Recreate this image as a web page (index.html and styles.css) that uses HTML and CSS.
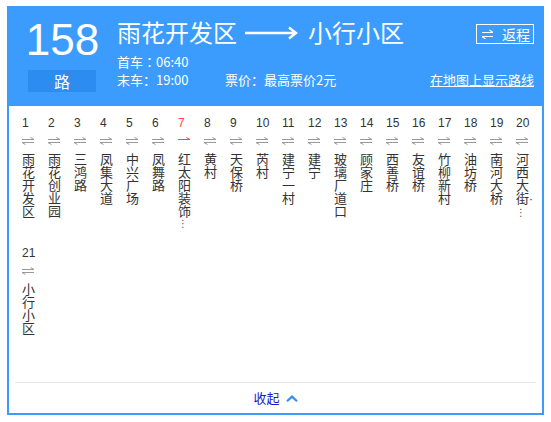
FILE: index.html
```html
<!DOCTYPE html>
<html lang="zh-CN">
<head>
<meta charset="utf-8">
<title>158路</title>
<link rel="stylesheet" href="styles.css">
</head>
<body>
<div class="card">
  <header class="head">
    <div class="lineno">
      <div class="num">158</div>
      <div class="lu">路</div>
    </div>
    <div class="info">
      <div class="titlerow">
        <span class="from">雨花开发区</span>
        <svg class="bigarrow" width="53" height="14" viewBox="0 0 53 14"><path d="M0 7H51M44 1.5L51 7L44 12.5" stroke="#fff" stroke-width="2.4" fill="none"/></svg>
        <span class="to">小行小区</span>
        <a class="back" href="#"><svg class="backicon" width="11" height="10" viewBox="0 0 11 10"><path d="M0 3.5H11M11 3.5L7.5 1M0 7.5H11M0 7.5L3.5 10" stroke="#fff" stroke-width="1.2" fill="none"/></svg>返程</a>
      </div>
      <div class="row">首车<span class="colon">：</span>06:40</div>
      <div class="row"><span class="last">末车<span class="colon">：</span>19:00</span><span>票价<span class="colon">：</span>最高票价2元</span><a class="maplink" href="#">在地图上显示路线</a></div>
    </div>
  </header>

  <div class="stops">
    <div class="stop"><div class="no">1</div><svg class="dir" width="12" height="8" viewBox="0 0 12 8"><path d="M0 2.5H12M12 2.5L8.5 0.5M0 5.5H12M0 5.5L3.5 7.5" stroke="#999" fill="none"/></svg><div class="name">雨花开发区</div></div>
    <div class="stop"><div class="no">2</div><svg class="dir" width="12" height="8" viewBox="0 0 12 8"><path d="M0 2.5H12M12 2.5L8.5 0.5M0 5.5H12M0 5.5L3.5 7.5" stroke="#999" fill="none"/></svg><div class="name">雨花创业园</div></div>
    <div class="stop"><div class="no">3</div><svg class="dir" width="12" height="8" viewBox="0 0 12 8"><path d="M0 2.5H12M12 2.5L8.5 0.5M0 5.5H12M0 5.5L3.5 7.5" stroke="#999" fill="none"/></svg><div class="name">三鸿路</div></div>
    <div class="stop"><div class="no">4</div><svg class="dir" width="12" height="8" viewBox="0 0 12 8"><path d="M0 2.5H12M12 2.5L8.5 0.5M0 5.5H12M0 5.5L3.5 7.5" stroke="#999" fill="none"/></svg><div class="name">凤集大道</div></div>
    <div class="stop"><div class="no">5</div><svg class="dir" width="12" height="8" viewBox="0 0 12 8"><path d="M0 2.5H12M12 2.5L8.5 0.5M0 5.5H12M0 5.5L3.5 7.5" stroke="#999" fill="none"/></svg><div class="name">中兴广场</div></div>
    <div class="stop"><div class="no">6</div><svg class="dir" width="12" height="8" viewBox="0 0 12 8"><path d="M0 2.5H12M12 2.5L8.5 0.5M0 5.5H12M0 5.5L3.5 7.5" stroke="#999" fill="none"/></svg><div class="name">凤舞路</div></div>
    <div class="stop oneway"><div class="no">7</div><svg class="dir" width="12" height="8" viewBox="0 0 12 8"><path d="M0 2.5H12M12 2.5L8.5 0.5" stroke="#f44" fill="none"/></svg><div class="name">红太阳装饰<span class="more">⋮</span></div></div>
    <div class="stop"><div class="no">8</div><svg class="dir" width="12" height="8" viewBox="0 0 12 8"><path d="M0 2.5H12M12 2.5L8.5 0.5M0 5.5H12M0 5.5L3.5 7.5" stroke="#999" fill="none"/></svg><div class="name">黄村</div></div>
    <div class="stop"><div class="no">9</div><svg class="dir" width="12" height="8" viewBox="0 0 12 8"><path d="M0 2.5H12M12 2.5L8.5 0.5M0 5.5H12M0 5.5L3.5 7.5" stroke="#999" fill="none"/></svg><div class="name">天保桥</div></div>
    <div class="stop"><div class="no">10</div><svg class="dir" width="12" height="8" viewBox="0 0 12 8"><path d="M0 2.5H12M12 2.5L8.5 0.5M0 5.5H12M0 5.5L3.5 7.5" stroke="#999" fill="none"/></svg><div class="name">芮村</div></div>
    <div class="stop"><div class="no">11</div><svg class="dir" width="12" height="8" viewBox="0 0 12 8"><path d="M0 2.5H12M12 2.5L8.5 0.5M0 5.5H12M0 5.5L3.5 7.5" stroke="#999" fill="none"/></svg><div class="name">建宁一村</div></div>
    <div class="stop"><div class="no">12</div><svg class="dir" width="12" height="8" viewBox="0 0 12 8"><path d="M0 2.5H12M12 2.5L8.5 0.5M0 5.5H12M0 5.5L3.5 7.5" stroke="#999" fill="none"/></svg><div class="name">建宁</div></div>
    <div class="stop"><div class="no">13</div><svg class="dir" width="12" height="8" viewBox="0 0 12 8"><path d="M0 2.5H12M12 2.5L8.5 0.5M0 5.5H12M0 5.5L3.5 7.5" stroke="#999" fill="none"/></svg><div class="name">玻璃厂道口</div></div>
    <div class="stop"><div class="no">14</div><svg class="dir" width="12" height="8" viewBox="0 0 12 8"><path d="M0 2.5H12M12 2.5L8.5 0.5M0 5.5H12M0 5.5L3.5 7.5" stroke="#999" fill="none"/></svg><div class="name">顾家庄</div></div>
    <div class="stop"><div class="no">15</div><svg class="dir" width="12" height="8" viewBox="0 0 12 8"><path d="M0 2.5H12M12 2.5L8.5 0.5M0 5.5H12M0 5.5L3.5 7.5" stroke="#999" fill="none"/></svg><div class="name">西善桥</div></div>
    <div class="stop"><div class="no">16</div><svg class="dir" width="12" height="8" viewBox="0 0 12 8"><path d="M0 2.5H12M12 2.5L8.5 0.5M0 5.5H12M0 5.5L3.5 7.5" stroke="#999" fill="none"/></svg><div class="name">友谊桥</div></div>
    <div class="stop"><div class="no">17</div><svg class="dir" width="12" height="8" viewBox="0 0 12 8"><path d="M0 2.5H12M12 2.5L8.5 0.5M0 5.5H12M0 5.5L3.5 7.5" stroke="#999" fill="none"/></svg><div class="name">竹柳新村</div></div>
    <div class="stop"><div class="no">18</div><svg class="dir" width="12" height="8" viewBox="0 0 12 8"><path d="M0 2.5H12M12 2.5L8.5 0.5M0 5.5H12M0 5.5L3.5 7.5" stroke="#999" fill="none"/></svg><div class="name">油坊桥</div></div>
    <div class="stop"><div class="no">19</div><svg class="dir" width="12" height="8" viewBox="0 0 12 8"><path d="M0 2.5H12M12 2.5L8.5 0.5M0 5.5H12M0 5.5L3.5 7.5" stroke="#999" fill="none"/></svg><div class="name">南河大桥</div></div>
    <div class="stop"><div class="no">20</div><svg class="dir" width="12" height="8" viewBox="0 0 12 8"><path d="M0 2.5H12M12 2.5L8.5 0.5M0 5.5H12M0 5.5L3.5 7.5" stroke="#999" fill="none"/></svg><div class="name">河西大<span class="nw">街<span class="dot">·</span></span><span class="more">⋮</span></div></div>
    <div class="stop"><div class="no">21</div><svg class="dir" width="12" height="8" viewBox="0 0 12 8"><path d="M0 2.5H12M12 2.5L8.5 0.5M0 5.5H12M0 5.5L3.5 7.5" stroke="#999" fill="none"/></svg><div class="name">小行小区</div></div>
  </div>

  <footer class="foot">
    <a class="fold" href="#">收起<svg class="chev" width="12" height="7" viewBox="0 0 12 7"><path d="M1 6.2L6 1.6L11 6.2" stroke="#3b8ef0" stroke-width="2.2" fill="none"/></svg></a>
  </footer>
</div>
</body>
</html>
```

FILE: styles.css
```css
* { box-sizing: border-box; }

body {
  margin: 0;
  background: #fff;
  font-family: "Noto Sans CJK SC", "Liberation Sans", sans-serif;
  color: #333;
}

.card {
  margin: 6px 0 0 7px;
  width: 537px;
  height: 409px;
  border: 2px solid #3b9cfe;
  display: flex;
  flex-direction: column;
  background: #fff;
}

.head {
  height: 98px;
  flex: none;
  background: #3b9cfe;
  color: #fff;
  display: flex;
  padding: 10px 8px 0 19px;
}

.lineno {
  width: 68px;
  flex: none;
}

.num {
  font-family: "Liberation Sans", Arial, sans-serif;
  font-size: 44px;
  line-height: 44px;
  text-align: center;
  white-space: nowrap;
  margin: 0 -4px 0 -3px;
}

.lu {
  margin-top: 8px;
  height: 22px;
  line-height: 22px;
  font-size: 16px;
  text-align: center;
  background: #2c8cef;
}

.info {
  flex: 1;
  margin-left: 21px;
  display: flex;
  flex-direction: column;
}

.titlerow {
  display: flex;
  align-items: flex-start;
  height: 28px;
  margin-bottom: 7px;
}

.from, .to {
  font-size: 24px;
  line-height: 28px;
  white-space: nowrap;
}

.bigarrow {
  margin: 8px 10px 0 8px;
  flex: none;
}

.back {
  margin-left: auto;
  margin-top: 6px;
  height: 20px;
  width: 58px;
  border: 1px solid #fff;
  color: #fff;
  text-decoration: none;
  font-size: 14px;
  line-height: 18px;
  display: flex;
  align-items: center;
  padding-left: 5px;
}

.backicon {
  margin-right: 9px;
  flex: none;
}

.row {
  font-size: 13px;
  line-height: 18px;
  display: flex;
  white-space: nowrap;
}

.colon {
  font-family: "Noto Sans CJK TC", "Noto Sans CJK SC", sans-serif;
}

.last {
  width: 108px;
}

.maplink {
  margin-left: auto;
  color: #fff;
  text-decoration: underline;
}

.stops {
  flex: 1;
  display: grid;
  grid-template-columns: repeat(20, 26px);
  grid-auto-rows: min-content;
  row-gap: 14px;
  padding: 8px 0 0 13px;
  align-content: start;
}

.stop {
  display: flex;
  flex-direction: column;
  align-items: flex-start;
}

.no {
  font-family: "Liberation Sans", Arial, sans-serif;
  font-size: 12px;
  line-height: 18px;
  color: #333;
}

.oneway .no {
  color: #f44;
}

.dir {
  display: block;
  margin-top: 5px;
}

.name {
  margin-top: 7px;
  width: 13px;
  font-size: 13px;
  line-height: 13px;
  color: #333;
  word-break: break-all;
}

.nw {
  white-space: nowrap;
}

.dot {
  font-family: "Liberation Sans", sans-serif;
  font-size: 12px;
}

.more {
  display: block;
  font-family: "DejaVu Sans", sans-serif;
  font-size: 10px;
  line-height: 13px;
  color: #555;
}

.foot {
  flex: none;
  height: 31px;
  margin: 0 6px;
  border-top: 1px solid #e8e8e8;
  display: flex;
  justify-content: center;
  align-items: center;
}

.fold {
  color: #1a1acd;
  text-decoration: none;
  font-size: 13px;
  line-height: 30px;
  display: flex;
  align-items: center;
}

.chev {
  margin-left: 6px;
}
```
